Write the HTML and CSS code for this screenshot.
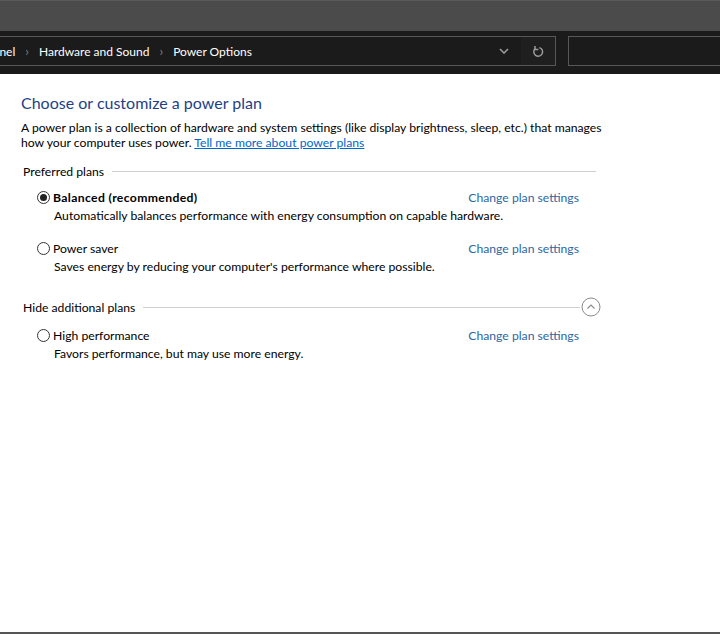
FILE: index.html
```html
<!DOCTYPE html>
<html lang="en">
<head>
  <meta charset="UTF-8">
  <title>Power Options</title>
  <link rel="stylesheet" href="styles.css">
</head>
<body>

  <!-- Title bar -->
  <div class="titlebar"></div>

  <!-- Address bar -->
  <div class="navbar">
    <div class="address">
      <div class="crumbs">
        <span class="crumb">Control Panel</span>
        <span class="sep">&#8250;</span>
        <span class="crumb">Hardware and Sound</span>
        <span class="sep">&#8250;</span>
        <span class="crumb">Power Options</span>
      </div>
      <div class="addr-btn">
        <svg width="10" height="6" viewBox="0 0 10 6"><path d="M1 1 L5 5 L9 1" fill="none" stroke="#9a9a9a" stroke-width="1.6"/></svg>
      </div>
      <div class="addr-btn refresh">
        <svg width="12" height="13" viewBox="0 0 12 13"><path d="M3.2 3.6 A4.4 4.4 0 1 0 7.4 2.6" fill="none" stroke="#9a9a9a" stroke-width="1.5"/><path d="M3 1 L3 4.4 L6.4 4.4" fill="none" stroke="#9a9a9a" stroke-width="1.5"/></svg>
      </div>
    </div>
    <div class="search"></div>
  </div>

  <!-- Main content -->
  <div class="content">
    <h1>Choose or customize a power plan</h1>
    <p class="intro">A power plan is a collection of hardware and system settings (like display brightness, sleep, etc.) that manages how your computer uses power. <a href="#" class="more">Tell me more about power plans</a></p>

    <div class="group preferred">
      <div class="group-head">
        <span class="group-title">Preferred plans</span>
        <span class="rule"></span>
      </div>

      <div class="plan">
        <div class="plan-row">
          <label class="radio checked"><span class="dot"></span><b>Balanced (recommended)</b></label>
          <a href="#" class="change">Change plan settings</a>
        </div>
        <div class="plan-desc">Automatically balances performance with energy consumption on capable hardware.</div>
      </div>

      <div class="plan">
        <div class="plan-row">
          <label class="radio"><span class="dot"></span>Power saver</label>
          <a href="#" class="change">Change plan settings</a>
        </div>
        <div class="plan-desc">Saves energy by reducing your computer's performance where possible.</div>
      </div>
    </div>

    <div class="group additional">
      <div class="group-head">
        <span class="group-title">Hide additional plans</span>
        <span class="rule"></span>
        <span class="collapse">
          <svg width="20" height="20" viewBox="0 0 20 20"><circle cx="10" cy="10" r="9" fill="none" stroke="#8a8a8a" stroke-width="1"/><path d="M6.5 11.5 L10 8 L13.5 11.5" fill="none" stroke="#8a8a8a" stroke-width="1.1"/></svg>
        </span>
      </div>

      <div class="plan">
        <div class="plan-row">
          <label class="radio"><span class="dot"></span>High performance</label>
          <a href="#" class="change">Change plan settings</a>
        </div>
        <div class="plan-desc">Favors performance, but may use more energy.</div>
      </div>
    </div>
  </div>

</body>
</html>
```

FILE: styles.css
```css
/* General */
html, body {
  height: 100%;
}
body {
  margin: 0;
  font-family: 'Lato', 'Noto Sans', sans-serif;
  font-size: 12.2px;
  color: #000;
  background: #fff;
  display: flex;
  flex-direction: column;
  overflow: hidden;
}

/* Title bar */
.titlebar {
  height: 30px;
  background: #4b4b4b;
  border-top: 1px solid #5a5a5a;
  flex: none;
}

/* Address bar */
.navbar {
  height: 38px;
  padding-top: 5px;
  background: #1b1b1b;
  display: flex;
  align-items: flex-start;
  flex: none;
  overflow: hidden;
}
.address {
  width: 615px;
  margin-left: -61px;
  height: 28px;
  border: 1px solid #575757;
  display: flex;
  align-items: center;
  flex: none;
}
.crumbs {
  flex: 1;
  display: flex;
  align-items: center;
  gap: 10px;
  padding-left: 4px;
  color: #fff;
  font-size: 12px;
  white-space: nowrap;
}
.sep {
  color: #7d7d7d;
  font-size: 13px;
}
.addr-btn {
  width: 34px;
  height: 28px;
  display: flex;
  align-items: center;
  justify-content: center;
}
.refresh {
  background: #1f1f1f;
}
.search {
  flex: 1;
  height: 28px;
  margin-left: 12px;
  border: 1px solid #575757;
  border-right: none;
}

/* Content */
.content {
  flex: 1;
  padding: 19px 21px 0;
  border-bottom: 2px solid #555;
}
h1 {
  margin: 0 0 7px;
  font-size: 16px;
  line-height: 20px;
  font-weight: normal;
  color: #1e3f87;
}
.intro {
  margin: 0;
  width: 590px;
  line-height: 15px;
}
.more {
  color: #0066cc;
}

/* Plan groups */
.group {
  width: 573px;
  margin-left: 2px;
  display: flex;
  flex-direction: column;
}
.preferred {
  margin-top: 12px;
}
.additional {
  margin-top: 23px;
}
.group-head {
  display: flex;
  align-items: center;
  height: 18px;
}
.group-title {
  margin-right: 8px;
  white-space: nowrap;
}
.rule {
  flex: 1;
  height: 1px;
  background: #cfcfcf;
}
.collapse {
  display: flex;
  margin-left: 1px;
  margin-right: -5px;
}
.plan {
  padding-left: 14px;
  margin-top: 8px;
}
.plan + .plan {
  margin-top: 15px;
}
.additional .plan {
  margin-top: 10px;
}
.plan-row {
  display: flex;
  align-items: center;
  justify-content: space-between;
  height: 18px;
}
.radio {
  display: flex;
  align-items: center;
  gap: 3px;
}
.radio b {
  letter-spacing: 0.35px;
}
.dot {
  width: 11px;
  height: 11px;
  border: 1px solid #333;
  border-radius: 50%;
  position: relative;
}
.radio.checked .dot::after {
  content: "";
  position: absolute;
  left: 2px;
  top: 2px;
  width: 7px;
  height: 7px;
  border-radius: 50%;
  background: #222;
}
.change {
  color: #2d67a3;
  text-decoration: none;
  margin-right: 17px;
}
.plan-desc {
  padding-left: 17px;
  margin-top: 2px;
  line-height: 16px;
}
```
